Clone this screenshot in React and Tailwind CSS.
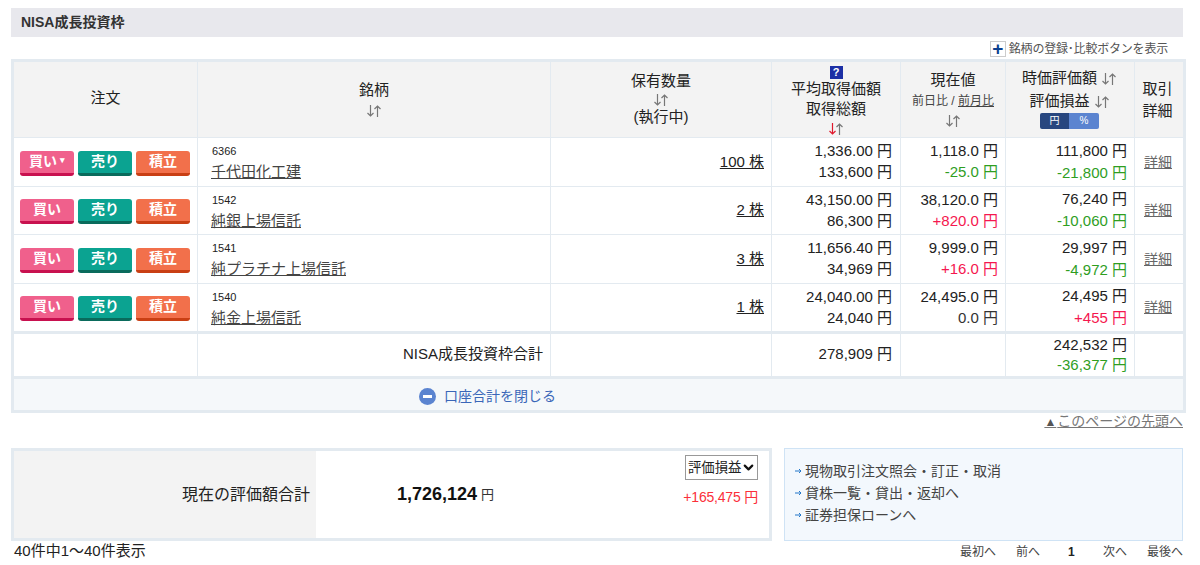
import { ChevronDown } from 'lucide-react';

const rows = [
  { code: '6366', name: '千代田化工建', qty: '100 株', avg: '1,336.00 円', total: '133,600 円', price: '1,118.0 円', diff: '-25.0 円', diffColor: 'text-[#2f9e1f]', value: '111,800 円', pl: '-21,800 円', plColor: 'text-[#2f9e1f]', arrow: true, height: 'h-[49px]' },
  { code: '1542', name: '純銀上場信託', qty: '2 株', avg: '43,150.00 円', total: '86,300 円', price: '38,120.0 円', diff: '+820.0 円', diffColor: 'text-[#f5174f]', value: '76,240 円', pl: '-10,060 円', plColor: 'text-[#2f9e1f]', height: 'h-[48px]' },
  { code: '1541', name: '純プラチナ上場信託', qty: '3 株', avg: '11,656.40 円', total: '34,969 円', price: '9,999.0 円', diff: '+16.0 円', diffColor: 'text-[#f5174f]', value: '29,997 円', pl: '-4,972 円', plColor: 'text-[#2f9e1f]', height: 'h-[49px]' },
  { code: '1540', name: '純金上場信託', qty: '1 株', avg: '24,040.00 円', total: '24,040 円', price: '24,495.0 円', diff: '0.0 円', diffColor: 'text-[#333]', value: '24,495 円', pl: '+455 円', plColor: 'text-[#f5174f]', height: 'h-[49px]' },
];

function Sort({ active }) {
  return (
    <svg width="16" height="14" viewBox="0 0 16 14" className="inline-block" fill="none" strokeWidth="1.2">
      <path d="M4.5 1v11M1.5 9l3 3 3-3" stroke={active ? '#e0182d' : '#777'} />
      <path d="M11.5 13V2M8.5 5l3-3 3 3" stroke="#777" />
    </svg>
  );
}

function OrderButton({ label, color, arrow }) {
  return (
    <span className={`flex h-[25px] w-[54px] items-center justify-center rounded-[3px] border-b-[3px] pb-[2px] text-[14px] leading-none font-bold text-white ${color}`}>
      {label}
      {arrow && <span className="ml-[3px] text-[9px]">▾</span>}
    </span>
  );
}

function Row({ r }) {
  return (
    <tr className={r.height}>
      <td className="border border-[#e3eaf0] pl-[6px] pt-[2px]">
        <div className="flex gap-[4px]">
          <OrderButton label="買い" arrow={r.arrow} color="border-[#c8114f] bg-[#f0608c]" />
          <OrderButton label="売り" color="border-[#0a6b5c] bg-[#0ba391]" />
          <OrderButton label="積立" color="border-[#c93f14] bg-[#f2704b]" />
        </div>
      </td>
      <td className="border border-[#e3eaf0] pl-[14px] align-top">
        <div className="pt-[6px] text-[11px] leading-[14px]">{r.code}</div>
        <div className="mt-[3px] -ml-[1px] leading-[21px] text-[#444]"><span className="underline">{r.name}</span></div>
      </td>
      <td className="border border-[#e3eaf0] pr-[7px] text-right"><span className="underline">{r.qty}</span></td>
      <td className="border border-[#e3eaf0] pb-[2px] pr-[8px] text-right leading-[21px]">{r.avg}<br />{r.total}</td>
      <td className="border border-[#e3eaf0] pb-[2px] pr-[7px] text-right leading-[21px]">{r.price}<br /><span className={r.diffColor}>{r.diff}</span></td>
      <td className="border border-[#e3eaf0] pb-[1px] pr-[7px] text-right leading-[22px]">{r.value}<br /><span className={r.plColor}>{r.pl}</span></td>
      <td className="border border-[#e3eaf0] pr-[2px] text-center text-[14px] text-[#666]"><span className="underline">詳細</span></td>
    </tr>
  );
}

export default function App() {
  return (
    <div className="h-[565px] w-[1200px] overflow-hidden bg-white px-[11px] pt-[8px] font-['Liberation_Sans','Noto_Sans_CJK_JP',sans-serif] text-[15px] text-[#222]">
      <div className="flex h-[29px] w-[1172px] items-center bg-[#e8e8ed] pl-[10px] text-[14px] font-bold text-[#333]">NISA成長投資枠</div>

      <div className="flex h-[22px] w-[1172px] items-center justify-end pr-[15px] pt-[1px] text-[12px] tracking-[-0.2px] text-[#555]">
        <span className="mr-[3px] flex h-[16px] w-[16px] items-center justify-center border border-[#ccc] bg-white text-[19px] leading-none font-bold text-[#0b3f8f]">+</span>
        銘柄の登録･比較ボタンを表示
      </div>

      <table className="w-[1172px] table-fixed border-collapse border-[3px] border-[#e3eaf0]">
        <colgroup>
          <col className="w-[185px]" />
          <col className="w-[353px]" />
          <col className="w-[221px]" />
          <col className="w-[129px]" />
          <col className="w-[105px]" />
          <col className="w-[129px]" />
          <col className="w-[50px]" />
        </colgroup>
        <thead>
          <tr className="h-[77px] bg-[#f3f3f3] text-center font-normal">
            <th className="border border-[#e3eaf0] pb-[3px] font-normal">注文</th>
            <th className="border border-[#e3eaf0] font-normal leading-[20px]"><div>銘柄</div><Sort /></th>
            <th className="border border-[#e3eaf0] pb-[2px] font-normal leading-[18px]"><div>保有数量</div><Sort /><div>(執行中)</div></th>
            <th className="border border-[#e3eaf0] align-top font-normal leading-[20px]">
              <div className="mx-auto mt-[4px] flex h-[13px] w-[13px] items-center justify-center bg-[#1c2fa5] text-[11px] leading-none font-bold text-white">?</div>
              <div>平均取得価額</div>
              <div>取得総額</div>
              <div className="mt-[1px] h-[15px] leading-none"><Sort active /></div>
            </th>
            <th className="border border-[#e3eaf0] font-normal leading-[20px]">
              <div>現在値</div>
              <div className="text-[12px] leading-[22px] text-[#444]">前日比 / <span className="underline">前月比</span></div>
              <div className="h-[18px] leading-none"><Sort /></div>
            </th>
            <th className="border border-[#e3eaf0] pt-[5px] pr-[1px] align-top font-normal leading-[22px]">
              <div>時価評価額 <Sort /></div>
              <div className="mt-[1px]">評価損益 <Sort /></div>
              <div className="mx-auto mt-[1px] flex h-[16px] w-[59px] overflow-hidden rounded-[2px] text-[10px] leading-none text-white">
                <span className="flex w-[29px] items-center justify-center bg-[#28477f]">円</span>
                <span className="flex flex-1 items-center justify-center bg-[#5b84d0]">%</span>
              </div>
            </th>
            <th className="border border-[#e3eaf0] pr-[3px] font-normal leading-[22px]">取引<br />詳細</th>
          </tr>
        </thead>
        <tbody>
          {rows.map((r) => <Row key={r.code} r={r} />)}
          <tr className="h-[45px] border-t-[3px] border-[#e3eaf0]">
            <td className="border border-[#e3eaf0]" />
            <td className="border border-[#e3eaf0] pb-[1px] pr-[7px] text-right">NISA成長投資枠合計</td>
            <td className="border border-[#e3eaf0]" />
            <td className="border border-[#e3eaf0] pb-[1px] pr-[8px] text-right">278,909 円</td>
            <td className="border border-[#e3eaf0]" />
            <td className="border border-[#e3eaf0] pb-[1px] pr-[7px] text-right leading-[20px]">242,532 円<br /><span className="text-[#2f9e1f]">-36,377 円</span></td>
            <td className="border border-[#e3eaf0]" />
          </tr>
          <tr className="h-[34px] border-t-[3px] border-[#e3eaf0] bg-[#f5f8fa]">
            <td colSpan={7} className="pr-[222px] text-center text-[14px] text-[#3a66b8]">
              <span className="inline-flex items-center gap-[8px]">
                <span className="flex h-[17px] w-[17px] items-center justify-center rounded-full bg-[#5b84d0]">
                  <span className="h-[3px] w-[9px] bg-white" />
                </span>
                口座合計を閉じる
              </span>
            </td>
          </tr>
        </tbody>
      </table>

      <div className="flex h-[16px] w-[1172px] items-center justify-end text-[14px] text-[#777]">
        <span className="underline"><span className="mr-[1px] text-[12px] text-[#555]">▲</span>このページの先頭へ</span>
      </div>

      <div className="mt-[19px] flex h-[93px] w-[1172px] justify-between">
        <div className="flex w-[761px] border-[3px] border-[#e3eaf0]">
          <div className="flex w-[302px] items-center justify-end bg-[#f3f3f3] pr-[6px] text-[16px]">現在の評価額合計</div>
          <div className="flex flex-1">
            <div className="flex w-[178px] items-center justify-end text-[13px] text-[#333]">
              <span className="mr-[4px] text-[18px] font-bold text-[#111]">1,726,124</span>円
            </div>
            <div className="flex flex-1 flex-col items-end pr-[11px] pt-[4px] text-[14px]">
              <div className="flex h-[25px] w-[73px] items-center justify-between border border-[#999] pl-[2px] pr-[1px] text-[13.33px] whitespace-nowrap">
                評価損益
                <ChevronDown size={15} strokeWidth={3.5} color="#111" className="shrink-0" />
              </div>
              <div className="mt-[7px] tracking-[-0.2px] text-[#fb2f3a]">+165,475 円</div>
            </div>
          </div>
        </div>
        <div className="flex w-[399px] flex-col justify-center border border-[#cfe3f5] bg-[#f3f8fd] pb-[4px] pl-[10px] text-[14px] leading-[22px] text-[#444]">
          {['現物取引注文照会・訂正・取消', '貸株一覧・貸出・返却へ', '証券担保ローンへ'].map((t) => (
            <div key={t} className="flex items-center">
              <svg width="7" height="6" viewBox="0 0 7 6" className="mr-[3px]" fill="none" stroke="#2277c9" strokeWidth="1"><path d="M0 3h6M4 1l2 2-2 2" /></svg>
              {t}
            </div>
          ))}
        </div>
      </div>

      <div className="flex h-[21px] w-[1172px] items-center justify-between pl-[3px]">
        <span>40件中1～40件表示</span>
        <div className="flex items-center text-[12px] text-[#444]">
          <span>最初へ</span>
          <span className="ml-[20px]">前へ</span>
          <span className="ml-[28px] w-[7px] font-bold text-[#222]">1</span>
          <span className="ml-[28px]">次へ</span>
          <span className="ml-[20px]">最後へ</span>
        </div>
      </div>
    </div>
  );
}
